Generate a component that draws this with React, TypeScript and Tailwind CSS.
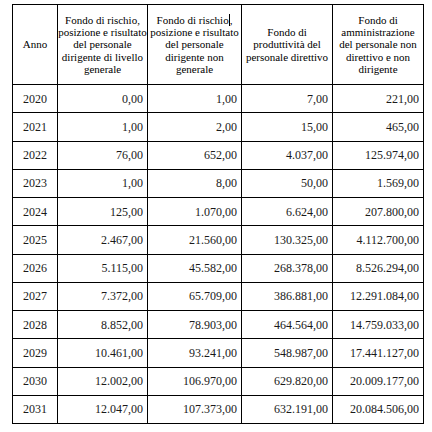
const rows: [string, string, string, string, string][] = [
  ['2020', '0,00', '1,00', '7,00', '221,00'],
  ['2021', '1,00', '2,00', '15,00', '465,00'],
  ['2022', '76,00', '652,00', '4.037,00', '125.974,00'],
  ['2023', '1,00', '8,00', '50,00', '1.569,00'],
  ['2024', '125,00', '1.070,00', '6.624,00', '207.800,00'],
  ['2025', '2.467,00', '21.560,00', '130.325,00', '4.112.700,00'],
  ['2026', '5.115,00', '45.582,00', '268.378,00', '8.526.294,00'],
  ['2027', '7.372,00', '65.709,00', '386.881,00', '12.291.084,00'],
  ['2028', '8.852,00', '78.903,00', '464.564,00', '14.759.033,00'],
  ['2029', '10.461,00', '93.241,00', '548.987,00', '17.441.127,00'],
  ['2030', '12.002,00', '106.970,00', '629.820,00', '20.009.177,00'],
  ['2031', '12.047,00', '107.373,00', '632.191,00', '20.084.506,00'],
]

export default function App() {
  return (
    <div className="w-[432px] h-[432px] bg-white pl-3 pt-1" style={{ fontFamily: "'Liberation Serif', 'Times New Roman', serif" }}>
      <table className="border-collapse table-fixed w-[411px] text-[#1a1a1a]">
        <colgroup>
          <col className="w-[45px]" />
          <col className="w-[90px]" />
          <col className="w-[94px]" />
          <col className="w-[91px]" />
          <col className="w-[91px]" />
        </colgroup>
        <thead>
          <tr className="h-[80px] text-[11px] leading-[12.2px] font-normal whitespace-nowrap text-black">
            <th className="border border-black text-center align-middle font-normal">Anno</th>
            <th className="border border-black text-center align-middle font-normal">
              Fondo di rischio,<br />posizione e risultato<br />del personale<br />dirigente di livello<br />generale
            </th>
            <th className="border border-black text-center align-middle font-normal">
              Fondo di <span className="border-r border-black">rischio</span>,<br />posizione e risultato<br />del personale<br />dirigente non<br />generale
            </th>
            <th className="border border-black text-center align-middle font-normal">
              Fondo di<br />produttività del<br />personale direttivo
            </th>
            <th className="border border-black text-center align-middle font-normal">
              Fondo di<br />amministrazione<br />del personale non<br />direttivo e non<br />dirigente
            </th>
          </tr>
        </thead>
        <tbody className="text-[12px]">
          {rows.map((r) => (
            <tr key={r[0]} className="h-[28.25px]">
              <td className="border border-black text-center">{r[0]}</td>
              <td className="border border-black text-right pr-1">{r[1]}</td>
              <td className="border border-black text-right pr-1">{r[2]}</td>
              <td className="border border-black text-right pr-1">{r[3]}</td>
              <td className="border border-black text-right pr-1">{r[4]}</td>
            </tr>
          ))}
        </tbody>
      </table>
    </div>
  )
}
